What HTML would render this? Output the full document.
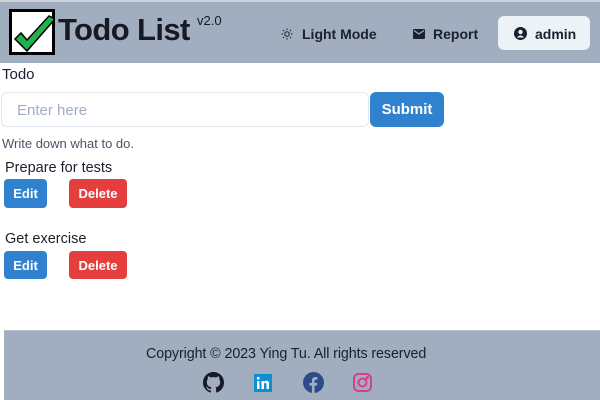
<!DOCTYPE html>
<html><head><style>
*{box-sizing:border-box;margin:0;padding:0}
body{width:600px;height:400px;overflow:hidden;background:#fff;font-family:"Liberation Sans",sans-serif;color:#1a202c;position:relative}
.hdr{position:absolute;left:0;top:0;width:600px;height:63px;background:#a0aec0;border-top:2px solid #cbd2dc}
.abs{position:absolute;white-space:nowrap}
.btn{position:absolute;color:#fff;font-weight:bold;font-size:13px;border-radius:4px;display:flex;align-items:center;justify-content:center}
.blue{background:#3182ce}.red{background:#e53e3e}
</style></head><body>
<div class="hdr"></div>
<svg class="abs" style="left:9px;top:9px" width="46" height="46" viewBox="0 0 46 46">
<rect x="1.5" y="1.5" width="43" height="43" fill="#fff" stroke="#000" stroke-width="3"/>
<path d="M6 30 L12 24 L18 31 L40 7 L46 10 L18 42 Z" fill="#22b14c" stroke="#000" stroke-width="1.5"/>
</svg>
<div class="abs" style="left:58px;top:12px;font-size:31px;font-weight:bold;color:#171923;letter-spacing:-0.6px">Todo List</div>
<div class="abs" style="left:197px;top:13px;font-size:13px;color:#171923">v2.0</div>
<svg class="abs" style="left:281px;top:28px" width="12" height="12" viewBox="0 0 12 12" stroke="#1a202c" stroke-width="1" fill="none"><circle cx="6" cy="6" r="2.3"/><path d="M6 0.5v1.5M6 10v1.5M0.5 6h1.5M10 6h1.5M2 2l1 1M9 9l1 1M2 10l1-1M9 3l1-1"/></svg>
<div class="abs" style="left:302px;top:26px;font-size:14px;font-weight:bold">Light Mode</div>
<svg class="abs" style="left:413px;top:29px" width="12" height="10" viewBox="0 0 12 10"><rect width="12" height="10" rx="1" fill="#1a202c"/><path d="M1 1.5 L6 5 L11 1.5" stroke="#a0aec0" stroke-width="1.2" fill="none"/></svg>
<div class="abs" style="left:433px;top:26px;font-size:14px;font-weight:bold">Report</div>
<div class="abs" style="left:498px;top:16px;width:92px;height:34px;background:#edf2f7;border-radius:6px"></div>
<svg class="abs" style="left:514px;top:27px" width="13" height="13" viewBox="0 0 13 13"><circle cx="6.5" cy="6.5" r="6.5" fill="#1a202c"/><circle cx="6.5" cy="5" r="2.2" fill="#edf2f7"/><path d="M2.8 10.5 Q6.5 6.5 10.2 10.5" fill="#edf2f7"/></svg>
<div class="abs" style="left:535px;top:26px;font-size:14px;font-weight:bold">admin</div>

<div class="abs" style="left:2px;top:66px;font-size:15px">Todo</div>
<div class="abs" style="left:1px;top:92px;width:368px;height:35px;border:1px solid #e2e8f0;border-radius:6px;padding:9px 0 0 15px;font-size:15px;color:#a0aec0">Enter here</div>
<div class="btn blue" style="left:370px;top:92px;width:74px;height:35px;font-size:15px;border-radius:6px">Submit</div>
<div class="abs" style="left:2px;top:136px;font-size:13px;color:#4a5568">Write down what to do.</div>

<div class="abs" style="left:5px;top:160px;font-size:14.5px">Prepare for tests</div>
<div class="btn blue" style="left:4px;top:179px;width:43px;height:29px">Edit</div>
<div class="btn red" style="left:69px;top:179px;width:58px;height:29px">Delete</div>
<div class="abs" style="left:5px;top:231px;font-size:14.5px">Get exercise</div>
<div class="btn blue" style="left:4px;top:251px;width:43px;height:28px">Edit</div>
<div class="btn red" style="left:69px;top:251px;width:58px;height:28px">Delete</div>

<div class="abs" style="left:4px;top:330px;width:596px;height:70px;background:#a0aec0;border-top:1px solid #b3bfcd"></div>
<div class="abs" style="left:146px;top:346px;font-size:14.3px;letter-spacing:-0.1px;color:#1a202c">Copyright © 2023 Ying Tu. All rights reserved</div>
<svg class="abs" style="left:203px;top:372px" width="21" height="21" viewBox="0 0 16 16"><path fill="#171923" d="M8 0C3.58 0 0 3.58 0 8c0 3.54 2.29 6.530 5.47 7.59.4.07.55-.17.55-.38v-1.33c-2.23.48-2.7-1.07-2.7-1.07-.36-.92-.89-1.170-.89-1.17-.73-.5.05-.49.05-.49.8.06 1.23.83 1.23.83.71 1.23 1.87.87 2.33.66.07-.52.28-.87.51-1.07-1.78-.2-3.64-.89-3.64-3.950 0-.87.31-1.59.82-2.15-.08-.2-.36-1.02.08-2.12 0 0 .67-.21 2.2.82a7.6 7.6 0 0 1 4 0c1.53-1.04 2.2-.82 2.2-.82.44 1.1.16 1.92.08 2.12.51.56.82 1.27.82 2.15 0 3.07-1.87 3.75-3.65 3.95.29.25.54.73.54 1.48v2.2c0 .21.15.46.55.38A8 8 0 0 0 16 8c0-4.42-3.58-8-8-8z"/></svg>
<svg class="abs" style="left:254px;top:374px" width="18" height="18" viewBox="0 0 18 18"><rect width="18" height="18" fill="#0e8fd3"/><rect x="3" y="7" width="2.5" height="8" fill="#fff"/><circle cx="4.25" cy="4.3" r="1.4" fill="#fff"/><path d="M7.5 7h2.4v1.2c.5-.9 1.4-1.4 2.5-1.4 1.8 0 2.6 1.1 2.6 3V15h-2.5v-4.6c0-1-.4-1.5-1.2-1.5s-1.3.6-1.3 1.5V15H7.5z" fill="#fff"/></svg>
<svg class="abs" style="left:303px;top:372px" width="21" height="21" viewBox="0 0 20 20"><circle cx="10" cy="10" r="10" fill="#2d4a8a"/><path d="M11 20v-7h2.3l.4-2.7H11V8.6c0-.8.3-1.3 1.4-1.3h1.4V4.9c-.3 0-1.1-.1-2-.1-2 0-3.3 1.2-3.3 3.4v2.1H6.2V13h2.3v7z" fill="#a0aec0"/></svg>
<svg class="abs" style="left:353px;top:373px" width="19" height="19" viewBox="0 0 19 19" fill="none" stroke="#d53f8c" stroke-width="2"><rect x="1" y="1" width="17" height="17" rx="4.5"/><circle cx="9.5" cy="9.5" r="4"/><circle cx="14.3" cy="4.7" r=".6" fill="#d53f8c"/></svg>
</body></html>
